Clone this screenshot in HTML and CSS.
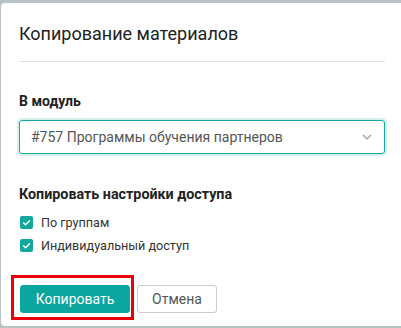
FILE: index.html
```html
<!DOCTYPE html>
<html lang="ru">
<head>
<meta charset="utf-8">
<link rel="stylesheet" href="styles.css">
</head>
<body>
<div class="dialog">
  <div class="header"><h1 class="title">Копирование материалов</h1></div>
  <div class="content">
    <div class="label">В модуль</div>
    <div class="select">
      <span class="select-text">#757 Программы обучения партнеров</span>
      <svg class="chevron" width="10" height="6" viewBox="0 0 10 6"><path d="M1 1 L5 5 L9 1" fill="none" stroke="#9a9a9a" stroke-width="1.2"/></svg>
    </div>
    <div class="label section">Копировать настройки доступа</div>
    <div class="checks">
      <div class="check-row"><span class="box"><svg width="13" height="13" viewBox="0 0 13 13"><path d="M3.2 6.6 L5.5 8.8 L9.8 4.4" fill="none" stroke="#fff" stroke-width="1.4"/></svg></span><span class="check-label">По группам</span></div>
      <div class="check-row"><span class="box"><svg width="13" height="13" viewBox="0 0 13 13"><path d="M3.2 6.6 L5.5 8.8 L9.8 4.4" fill="none" stroke="#fff" stroke-width="1.4"/></svg></span><span class="check-label">Индивидуальный доступ</span></div>
    </div>
    <div class="actions">
      <div class="primary-wrap"><button class="btn btn-primary">Копировать</button><span class="highlight"></span></div>
      <button class="btn btn-default">Отмена</button>
    </div>
  </div>
</div>
</body>
</html>
```
FILE: styles.css
```css
html, body {
  margin: 0;
  padding: 0;
}
body {
  background: #b5c3c4;
  font-family: Roboto, "Liberation Sans", sans-serif;
  height: 328px;
  overflow: hidden;
}
.dialog {
  margin: 3px 0 0 1px;
  height: 323px;
  background: #fff;
  border-radius: 4px 0 0 4px;
  box-sizing: border-box;
}
.header {
  padding: 19px 16px 0 18px;
}
.title {
  margin: 0;
  font-size: 18px;
  line-height: 24px;
  font-weight: 400;
  color: #222;
  padding-bottom: 15px;
  border-bottom: 1px solid #e3e3e3;
}
.content {
  padding: 29px 16px 0 18px;
}
.label {
  font-size: 14px;
  line-height: 20px;
  font-weight: 700;
  color: #222;
}
.section {
  margin-top: 30px;
  font-size: 14.3px;
}
.select {
  margin-top: 9px;
  height: 34px;
  box-sizing: border-box;
  border: 1px solid #14a99f;
  border-radius: 3px;
  box-shadow: 0 0 0 2px rgba(20, 169, 159, 0.18);
  display: flex;
  align-items: center;
  justify-content: space-between;
  padding: 0 12px 0 11px;
}
.select-text {
  font-size: 14px;
  color: #555;
}
.chevron {
  display: block;
}
.checks {
  margin-top: 8px;
  display: flex;
  flex-direction: column;
  gap: 3px;
}
.check-row {
  display: flex;
  align-items: center;
  height: 20px;
}
.box {
  width: 13px;
  height: 13px;
  border-radius: 2px;
  background: #12a89e;
  display: block;
  margin-left: 1px;
}
.box svg {
  display: block;
}
.check-label {
  margin-left: 8px;
  font-size: 12.6px;
  color: #333;
}
.actions {
  margin-top: 30px;
  display: flex;
  gap: 7px;
}
.primary-wrap {
  position: relative;
  display: flex;
}
.highlight {
  position: absolute;
  left: -8px;
  top: -10px;
  right: -4px;
  bottom: -7px;
  border: 3px solid #e8000b;
}
.btn {
  height: 28px;
  box-sizing: border-box;
  font-family: Roboto, "Liberation Sans", sans-serif;
  font-size: 14px;
  border-radius: 3px;
  padding: 0;
  cursor: pointer;
}
.btn-primary {
  width: 110px;
  margin-left: 1px;
  background: #0ba69d;
  border: 1px solid #0ba69d;
  color: #fff;
}
.btn-default {
  width: 80px;
  background: #fff;
  border: 1px solid #ccc;
  color: #555;
}
```
